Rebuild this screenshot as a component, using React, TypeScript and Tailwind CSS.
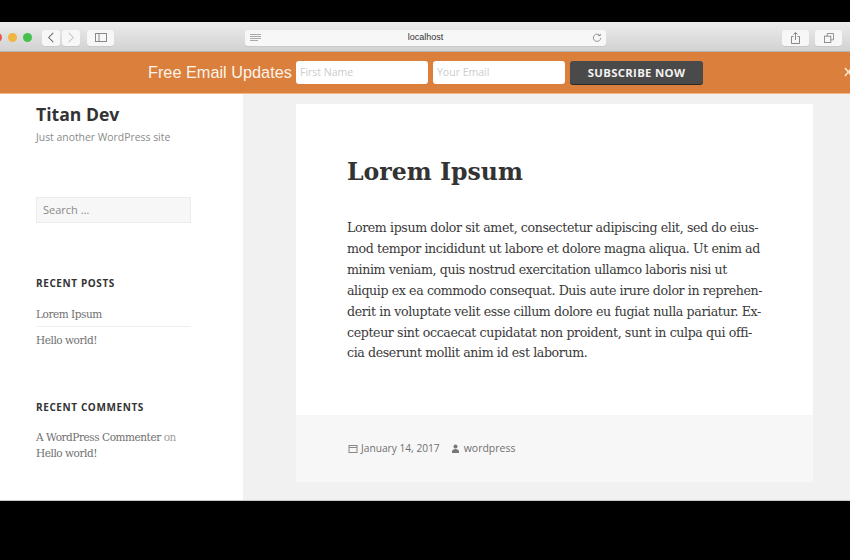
const bodyLines = [
  "Lorem ipsum dolor sit amet, consectetur adipiscing elit, sed do eius-",
  "mod tempor incididunt ut labore et dolore magna aliqua. Ut enim ad",
  "minim veniam, quis nostrud exercitation ullamco laboris nisi ut",
  "aliquip ex ea commodo consequat. Duis aute irure dolor in reprehen-",
  "derit in voluptate velit esse cillum dolore eu fugiat nulla pariatur. Ex-",
  "cepteur sint occaecat cupidatat non proident, sunt in culpa qui offi-",
  "cia deserunt mollit anim id est laborum.",
];

const serif = "font-['DejaVu_Serif',serif]";
const sans = "font-['Open_Sans',sans-serif]";

function ChromeButton({ className, children }: { className: string; children: React.ReactNode }) {
  return (
    <div className={`flex h-[16px] items-center justify-center rounded-[3px] bg-[#f7f7f7] shadow-[0_1px_0_#c9c9c9] ${className}`}>
      {children}
    </div>
  );
}

function BrowserBar() {
  return (
    <div className="flex h-[30px] shrink-0 items-center bg-gradient-to-b from-[#ececec] to-[#d2d2d2] border-b border-[#b5b5b5] pt-[2px]">
      <div className="-ml-[7px] flex w-[49px] shrink-0 items-center gap-[6px]">
        <div className="h-[9px] w-[9px] rounded-full bg-[#e8574f]" />
        <div className="h-[9px] w-[9px] rounded-full bg-[#f0b545]" />
        <div className="h-[9px] w-[9px] rounded-full bg-[#44c04c]" />
      </div>
      <ChromeButton className="w-[18px]">
        <svg width="8" height="11" viewBox="0 0 8 12" fill="none" stroke="#666" strokeWidth="1.1"><path d="M6.5 1 1.5 6l5 5" /></svg>
      </ChromeButton>
      <ChromeButton className="ml-[2px] w-[18px]">
        <svg width="8" height="11" viewBox="0 0 8 12" fill="none" stroke="#c4c4c4" strokeWidth="1.1"><path d="M1.5 1l5 5-5 5" /></svg>
      </ChromeButton>
      <ChromeButton className="ml-[7px] w-[27px]">
        <svg width="12" height="9" viewBox="0 0 12 9" fill="none" stroke="#888"><rect x="0.5" y="0.5" width="11" height="8" /><path d="M4 0.5v8" /></svg>
      </ChromeButton>
      <ChromeButton className="relative ml-[131px] w-[361px] pt-[1px]">
        <svg className="absolute left-[5px] top-[4px]" width="11" height="9" viewBox="0 0 11 9" stroke="#aaa"><path d="M0 .5h11M0 2.5h11M0 4.5h11M0 6.5h8" /></svg>
        <span className="font-['Liberation_Sans',sans-serif] text-[9px] text-[#333]">localhost</span>
        <svg className="absolute right-[4px] top-[3px]" width="10" height="10" viewBox="0 0 11 11" fill="none" stroke="#888"><path d="M8.8 3A4 4 0 1 0 9.5 5.5M6.8 2.8l2.2.3.2-2.2" /></svg>
      </ChromeButton>
      <ChromeButton className="ml-[176px] w-[27px]">
        <svg width="9" height="12" viewBox="0 0 9 12" fill="none" stroke="#888"><path d="M2.5 4.5H.5v7h8v-7h-2M4.5 8V.5M2.5 2.5l2-2 2 2" /></svg>
      </ChromeButton>
      <ChromeButton className="ml-[6px] w-[27px]">
        <svg width="10" height="10" viewBox="0 0 11 11" fill="none" stroke="#888"><rect x="0.5" y="3.5" width="7" height="7" /><path d="M3.5 3.5v-3h7v7h-3" /></svg>
      </ChromeButton>
    </div>
  );
}

function OptinBar() {
  return (
    <div className="relative flex h-[42px] shrink-0 items-center border-b border-[#f0b88a] bg-[#da7f3c] pl-[148px]">
      <span className="w-[144px] whitespace-nowrap font-['Liberation_Sans',sans-serif] text-[16.3px] text-[#fdf3ea]">Free Email Updates</span>
      <div className={`ml-[4px] flex h-[23px] w-[132px] items-center rounded-[3px] bg-white pl-[4px] ${sans} text-[10.5px] text-[#cccccc]`}>First Name</div>
      <div className={`ml-[5px] flex h-[23px] w-[132px] items-center rounded-[3px] bg-white pl-[4px] ${sans} text-[10.5px] text-[#cccccc]`}>Your Email</div>
      <div className={`ml-[5px] flex h-[23px] w-[133px] items-center justify-center rounded-[3px] bg-[#4a4a4a] shadow-[0_1px_0_#2a2a2a] ${sans} text-[11.4px] font-bold tracking-[0.3px] text-[#f2f2f2]`}>SUBSCRIBE NOW</div>
      <svg className="absolute left-[844px] top-[15px]" width="8" height="10" viewBox="0 0 8 10" fill="none" stroke="#fbe6d4" strokeWidth="1.6"><path d="M1 1l7 8M8 1L1 9" /></svg>
    </div>
  );
}

function Sidebar() {
  return (
    <div className="w-[243px] shrink-0 bg-white pl-[36px]">
      <div className={`mt-[8px] ${sans} text-[17.6px] leading-[24px] font-bold text-[#333]`}>Titan Dev</div>
      <div className={`mt-[3px] ${sans} text-[10.4px] leading-[16px] text-[#8a8a8a]`}>Just another WordPress site</div>
      <div className={`mt-[52px] flex h-[26px] w-[155px] items-center border border-[#ececec] bg-[#f7f7f7] pl-[6px] ${sans} text-[11px] text-[#8a8a8a]`}>Search …</div>
      <div className={`mt-[52px] ${sans} text-[10px] leading-[16px] font-bold tracking-[0.6px] text-[#333]`}>RECENT POSTS</div>
      <div className={`mt-[15px] w-[155px] border-b border-[#f0f0f0] pb-[3px] ${serif} text-[10.5px] leading-[17px] tracking-[-0.45px] text-[#707070]`}>Lorem Ipsum</div>
      <div className={`mt-[5px] ${serif} text-[10.5px] leading-[17px] tracking-[-0.45px] text-[#707070]`}>Hello world!</div>
      <div className={`mt-[50px] ${sans} text-[10px] leading-[16px] font-bold tracking-[0.6px] text-[#333]`}>RECENT COMMENTS</div>
      <div className={`mt-[15px] ${serif} text-[10.5px] leading-[15.5px] tracking-[-0.45px] text-[#707070]`}>
        A WordPress Commenter <span className="text-[#a0a0a0]">on</span>
        <br />
        Hello world!
      </div>
    </div>
  );
}

function Post() {
  return (
    <div className="flex-1 bg-[#f1f1f1] pt-[10px] pl-[53px]">
      <div className="w-[517px]">
        <div className="h-[311px] bg-white pl-[51px] pt-[52px]">
          <div className={`${serif} text-[23.6px] leading-[32px] font-bold text-[#333]`}>Lorem Ipsum</div>
          <div className={`mt-[30px] ${serif} text-[12.6px] leading-[20.9px] tracking-[-0.39px] text-[#3a3a3a]`}>
            {bodyLines.map((line) => (
              <div key={line} className="whitespace-nowrap">{line}</div>
            ))}
          </div>
        </div>
        <div className={`flex h-[67px] items-center bg-[#f7f7f7] pl-[52px] ${sans} text-[10.2px] text-[#707070]`}>
          <svg width="10" height="10" viewBox="0 0 10 10" fill="none" stroke="#888"><rect x="1" y="1.5" width="8" height="7" /><path d="M1 3.5h8" /></svg>
          <span className="ml-[3px]">January 14, 2017</span>
          <svg className="ml-[11px]" width="9" height="9" viewBox="0 0 9 9" fill="#777"><circle cx="4.5" cy="2.5" r="2" /><path d="M1 9V7.5C1 6 2.5 5 4.5 5S8 6 8 7.5V9z" /></svg>
          <span className="ml-[4px] text-[10.5px]">wordpress</span>
        </div>
      </div>
    </div>
  );
}

export default function App() {
  return (
    <div className="flex h-[560px] w-[850px] flex-col overflow-hidden bg-black">
      <div className="h-[22px] shrink-0 bg-black" />
      <BrowserBar />
      <OptinBar />
      <div className="flex h-[407px] shrink-0 border-b border-[#c8c8c8]">
        <Sidebar />
        <Post />
      </div>
    </div>
  );
}
